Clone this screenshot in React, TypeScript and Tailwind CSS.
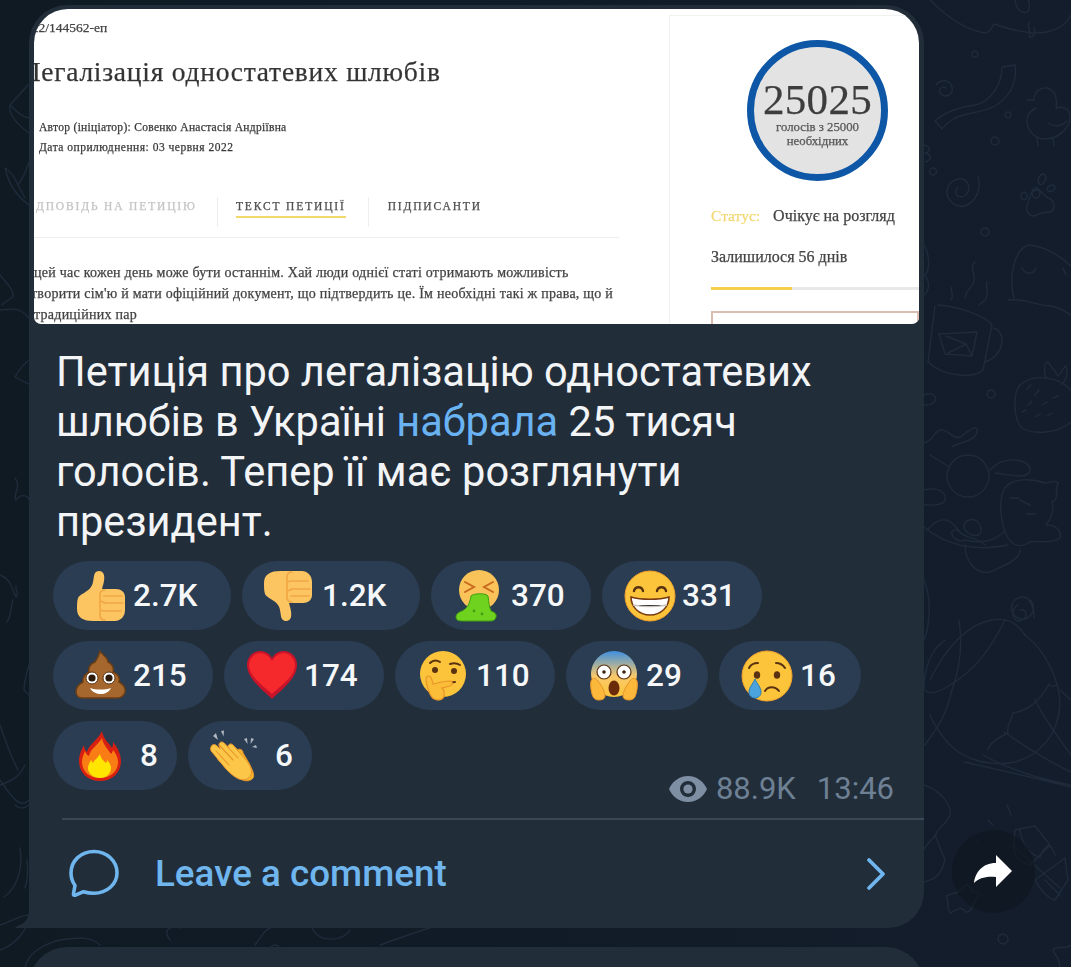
import type { ReactNode } from "react";

// Faint chat wallpaper, in page coordinates
const doodles = [
  "M930 0C945 15 965 30 985 33C990 33 992 27 994 24C1005 28 1020 32 1035 33C1050 33 1065 28 1071 15",
  "M1015 0C1016 10 1022 14 1028 12C1030 6 1030 2 1028 0M1030 22C1025 25 1032 30 1029 37C1034 38 1036 32 1034 28",
  "M1002 67L1015 65C1017 80 1012 95 995 106C985 112 965 113 955 118C950 121 945 125 942 129L935 121C945 112 960 107 975 105C990 102 1002 85 1002 67Z",
  "M1027 100H1033M1034 100C1034 92 1040 87 1047 88C1054 90 1058 97 1056 108C1062 106 1069 108 1070 115C1071 128 1058 139 1045 139C1034 139 1027 130 1027 120C1027 114 1032 110 1036 108M1048 123C1055 127 1062 126 1067 121M1037 138L1038 146M1053 138L1054 146",
  "M1036 188a4 5 0 1 0 .1 0M1043 174a3.5 5.5 20 1 0 .1 0M1024 192a3 4 0 1 0 .1 0M1052 185a3 4 60 1 0 .1 0M1037 190C1030 190 1030 198 1028 203C1025 210 1028 216 1034 216C1040 213 1046 212 1050 212C1056 210 1055 200 1048 198C1044 196 1042 190 1037 190Z",
  "M978 177C982 188 976 202 965 206C953 208 946 198 947 190C949 180 960 176 966 181C972 187 968 196 961 197C956 197 954 191 958 188",
  "M936 85C940 79 950 79 952 87C954 95 945 98 941 94C937 90 942 85 946 88",
  "M1014 298C1008 275 1015 250 1028 245C1045 246 1060 256 1071 266M1008 300C1025 298 1035 305 1050 306C1060 307 1066 312 1071 315M1022 268C1025 275 1033 275 1036 268M1063 268L1066 275",
  "M952 287C949 291 955 294 951 300M975 262C968 268 978 276 973 284C970 289 966 291 965 297M987 282C985 290 990 294 985 300C983 302 981 303 979 305",
  "M938 305C955 306 985 315 992 325M935 306L928 362C945 378 975 378 983 370L992 325M993 328C1006 330 1006 355 985 362M939 334L977 332L972 356L945 354ZM946 336L966 344L972 356M966 344L948 353",
  "M1020 385C1035 372 1060 378 1071 390M1020 385C1012 395 1014 420 1022 428C1035 436 1060 432 1071 422M1046 378C1043 370 1045 362 1048 362C1052 368 1056 372 1058 376C1062 372 1064 366 1066 366C1068 372 1068 378 1062 384",
  "M1027 389L1031 385M1035 395L1039 390M1028 405L1032 401M1042 405L1047 402M1053 398L1058 396M1035 417L1040 414M1047 416L1052 413M1022 412L1026 410",
  "M924 395C934 391 938 398 934 402C930 406 926 405 924 405",
  "M924 443C934 441 933 432 940 430C948 428 952 440 960 437C968 432 978 422 977 432C975 442 955 443 952 447",
  "M968 455a21 21 0 1 0 .1 0M930 455L948 466M924 490C940 486 948 494 944 502C940 506 930 505 924 505M927 530C940 515 950 518 958 530C965 540 975 535 985 545",
  "M990 470C1003 455 1030 458 1030 470C1028 480 1012 475 995 473M1005 488C1012 478 1030 478 1045 483C1052 482 1056 480 1058 483C1054 492 1060 498 1052 502C1055 510 1050 520 1046 525C1055 525 1062 530 1060 538C1050 545 1035 540 1030 542C1015 552 1005 540 1002 520C1000 508 1000 496 1005 488Z",
  "M1010 498L1019 498M1020 500L1030 505M1027 514L1035 514",
  "M924 527C945 545 975 552 1008 545M965 530C960 520 975 515 980 525C985 535 975 540 965 530ZM958 530C945 528 955 545 965 540C985 545 1000 538 1005 530M965 545C965 560 975 575 990 572C1005 565 1020 560 1020 550",
  "M1030 600a11 11 0 1 1-3-2C1030 600 1035 610 1034 618M1018 605C1010 608 1012 625 1022 620C1028 618 1027 608 1020 610",
  "M924 580C932 600 930 625 924 640",
  "M930 680C945 650 965 625 992 620C1005 618 1015 620 1025 635M959 620C962 640 961 665 952 690C945 720 935 730 925 745M1005 620C990 650 975 670 950 685C940 692 930 695 924 690",
  "M924 690C924 670 930 650 945 640M1025 635C1045 650 1060 680 1060 705C1058 735 1040 755 1015 762C990 767 965 760 950 745C940 735 932 720 930 715",
  "M1057 685C1060 682 1052 690 1049 684C1040 700 1030 710 1013 713C1012 720 1006 725 1008 733C998 738 990 742 988 750",
  "M1071 700L1060 690M1035 700C1045 720 1060 740 1071 755M1004 732C1030 750 1050 762 1071 772M983 755C1010 770 1045 780 1071 785M964 762C1000 770 1035 778 1071 787",
  "M924 785C940 790 952 805 950 815C946 825 935 830 936 835C932 840 925 845 924 850M935 835L945 860C940 880 930 880 924 882",
  "M1007 805L1011 815M988 820L993 825M975 841L978 842",
  "M1015 830L1035 826L1050 845L1030 865C1020 862 1012 855 1014 845ZM1020 830C1022 845 1030 855 1040 857M1012 845L1060 888M1040 857C1045 845 1050 840 1055 855M1035 880L1065 858L1068 880L1055 900C1050 900 1040 890 1035 880ZM1045 880L1060 895",
  "M963 888C966 883 970 885 972 892C978 892 983 892 975 900C973 905 972 912 966 912C960 905 958 910 950 913C945 905 950 900 946 897C948 893 958 895 963 888Z",
  "M1003 934a5 5 0 1 0 .1 0M1071 945C1065 950 1055 945 1053 950C1055 956 1060 958 1060 967",
  "M975 57a3 3 0 1 0-.1 0M1008 112a3 3 0 1 0 .1 0M995 137a4 4 0 1 0 .1 0M933 168a3.5 3.5 0 1 0 .1 0M985 228a4 4 0 1 0 .1 0M991 390a4 4 0 1 0 .1 0",
  "M924 145C932 147 930 152 925 153C932 155 932 160 925 162",
  "M924 245C930 255 930 270 925 275M924 275C930 280 930 290 924 295",
  "M28 85L10 105C8 115 18 125 29 133M10 105C17 112 22 117 29 118M5 168C12 172 15 178 18 185C25 175 28 165 29 162M5 168C10 190 22 200 29 205M18 185L25 198",
  "M0 275C8 285 14 290 13 297C8 300 5 302 2 305M0 310C10 310 18 305 29 318M29 360C22 365 18 372 15 377C20 380 25 382 29 384",
  "M15 478C22 487 12 495 16 500C22 492 29 497 29 500M0 575C12 580 12 590 16 597C20 588 15 595 16 586M13 600C10 607 12 615 7 622",
  "M29 665C26 675 24 682 24 690L29 695",
  "M0 725C5 740 10 755 18 770M0 785C15 780 20 775 25 765M0 780C10 795 20 810 29 800M15 805C20 810 25 808 29 805",
  "M20 848C24 870 15 890 4 897M25 888C28 880 28 870 27 860",
  "M0 925C15 920 20 915 30 915C28 930 15 945 0 950M25 967C28 955 40 945 60 940C75 938 90 935 100 945M170 940C162 930 170 925 180 928M275 945a5 5 0 1 0 .1 0M255 945C262 935 265 930 270 928M312 928C320 945 345 940 350 930M380 945C400 938 415 932 430 928",
];

function ThumbShape() {
  return (
    <>
      <path
        fill="#fdc562"
        d="M3 28c2-4 10-6 13-11 3-4 2-10 4-14 2-3 8-3 9 2 1 5-1 10-2 14h14c5 0 9 3 9 8v13c0 7-5 11-10 11H18C9 51 2 48 2 39c0-4 0-8 1-11z"
      />
      <path
        fill="none"
        stroke="#f1a845"
        strokeWidth="1.7"
        strokeLinecap="round"
        d="M30 20c-3 0-5 2-5 5v4c0 2 2 3 4 3M25 31v7c0 2 2 3 4 3M25 41v4c0 3 2 5 5 5M29 26h18M29 33h19M29 41h17"
      />
    </>
  );
}

const emojis: Record<string, ReactNode> = {
  up: <ThumbShape />,
  down: (
    <g transform="matrix(1 0 0 -1 0 52)">
      <ThumbShape />
    </g>
  ),
  vomit: (
    <>
      <circle cx="28" cy="20" r="20" fill="#f9c35a" />
      <path
        fill="none"
        stroke="#c86a1e"
        strokeWidth="2"
        strokeLinecap="round"
        d="M14 12l9 5-9 5M42 12l-9 5 9 5"
      />
      <path
        fill="#6fd21e"
        stroke="#3fa012"
        strokeWidth="1"
        d="M20 26c3-3 15-3 17 0 1 6 1 11 3 15 3 1 6 3 5 6-1 4-4 4-7 4H13c-4 0-8 0-8-4 0-3 3-5 6-6 5-2 8-8 9-15z"
      />
      <circle cx="23" cy="41" r="1.4" fill="#3fa012" />
      <circle cx="31" cy="44" r="1.4" fill="#3fa012" />
    </>
  ),
  grin: (
    <>
      <circle cx="26" cy="26" r="25" fill="#fcc43b" stroke="#f0a12e" strokeWidth="1" />
      <path
        fill="none"
        stroke="#5a3212"
        strokeWidth="2.4"
        strokeLinecap="round"
        d="M10 21c1-5 8-5 9 0M33 21c1-5 8-5 9 0"
      />
      <path
        fill="#fff"
        stroke="#7a3c12"
        strokeWidth="1.6"
        d="M7 27c10 3 28 3 38 0 0 10-8 18-19 18S7 37 7 27z"
      />
      <path stroke="#c9c3bb" strokeWidth="1.4" d="M9 35c11 2 23 2 34 0" />
    </>
  ),
  poop: (
    <>
      <path
        fill="#a5672d"
        stroke="#6a3d14"
        strokeWidth="1.4"
        d="M25 1c2 4 8 6 8 11 4 2 6 6 5 10 5 2 7 6 6 10 4 2 7 6 6 10-1 4-4 6-8 6H7c-4 0-6-3-6-6 0-4 3-8 7-10-1-4 2-8 6-10-1-5 1-8 6-10 2-3 4-6 5-11z"
      />
      <circle cx="17" cy="28" r="6" fill="#fff" stroke="#5a3212" />
      <circle cx="34" cy="28" r="6" fill="#fff" stroke="#5a3212" />
      <circle cx="17" cy="28" r="3.6" fill="#2b1a0c" />
      <circle cx="34" cy="28" r="3.6" fill="#2b1a0c" />
      <path fill="#fff" d="M15 38c6 2 15 2 21 0-2 4-6 6-10 6s-9-2-11-6z" />
    </>
  ),
  heart: (
    <>
      <path
        fill="#c8142a"
        d="M26 49C18 41 1 29 1 15 1 6 8 1 14 1c5 0 9 2 12 7 3-5 7-7 12-7 6 0 13 5 13 14 0 14-17 26-25 34z"
      />
      <path
        fill="#f5282c"
        d="M26 44C18 36 3 27 3 15 3 8 9 3 14 3c5 0 9 3 12 8 3-5 7-8 12-8 5 0 11 5 11 12 0 12-15 21-23 29z"
      />
    </>
  ),
  think: (
    <>
      <circle cx="26" cy="24" r="23" fill="#fcc43b" />
      <path
        fill="none"
        stroke="#5a3212"
        strokeWidth="2"
        strokeLinecap="round"
        d="M13 13c3-3 7-3 10-1M33 14c3-1 7-1 10 1M26 35c4-2 8-3 12-3"
      />
      <circle cx="18" cy="20" r="3" fill="#5a3212" />
      <circle cx="37" cy="21" r="3" fill="#5a3212" />
      <path
        fill="#fbbd38"
        stroke="#e8952a"
        strokeWidth="1.2"
        d="M12 26c2 0 3 3 4 8 4-1 13-3 17-3 3 0 3 4 0 5l-8 2c3 2 3 9 0 11-3 2-9 1-11-3-3-5-5-13-5-17 0-2 1-3 3-3z"
      />
    </>
  ),
  scream: (
    <>
      <defs>
        <linearGradient id="screamFace" x1="0" y1="0" x2="0" y2="1">
          <stop offset="0" stopColor="#3e8fe0" />
          <stop offset="0.55" stopColor="#f9c96a" />
          <stop offset="1" stopColor="#fcc43b" />
        </linearGradient>
      </defs>
      <circle cx="26" cy="24" r="23" fill="url(#screamFace)" />
      <circle cx="16" cy="22" r="7" fill="#fff" stroke="#5a3212" strokeWidth="1.2" />
      <circle cx="36" cy="22" r="7" fill="#fff" stroke="#5a3212" strokeWidth="1.2" />
      <circle cx="16" cy="22" r="1.8" fill="#3a2410" />
      <circle cx="36" cy="22" r="1.8" fill="#3a2410" />
      <ellipse cx="26" cy="38" rx="5.5" ry="7.5" fill="#6b2a08" />
      <path
        fill="#fcb83a"
        stroke="#e8952a"
        d="M3 31c2-4 5-3 7 0 4 5 7 11 7 15 0 3-3 4-6 4-4 0-6-2-7-6-1-4-2-9-1-13zM49 31c-2-4-5-3-7 0-4 5-7 11-7 15 0 3 3 4 6 4 4 0 6-2 7-6 1-4 2-9 1-13z"
      />
    </>
  ),
  cry: (
    <>
      <circle cx="26" cy="26" r="25" fill="#fcc43b" stroke="#f0a12e" strokeWidth="1" />
      <path
        fill="none"
        stroke="#5a3212"
        strokeWidth="2"
        strokeLinecap="round"
        d="M8 18c2-4 6-5 9-5M35 13c3 0 7 2 9 5M24 41c3-5 10-5 14 0"
      />
      <ellipse cx="16" cy="25" rx="3.2" ry="3.8" fill="#5a3212" />
      <ellipse cx="36" cy="25" rx="3.2" ry="3.8" fill="#5a3212" />
      <path
        fill="#4aa3dd"
        stroke="#2b7db5"
        d="M14 29c2 5 6 8 6 13 0 4-3 6-6 6s-6-2-6-6c0-5 4-8 6-13z"
      />
    </>
  ),
  fire: (
    <>
      <path
        fill="#d81f12"
        d="M28 1c1 8 7 12 10 17 1-2 1-4 1-6 5 6 8 13 8 19 0 12-9 20-21 20S5 43 5 31c0-7 3-12 5-16 0 3 1 5 3 7 2-8 11-12 15-21z"
      />
      <path
        fill="#f97d14"
        d="M28 8c1 7 6 11 9 16 1-1 2-3 2-4 4 5 5 9 5 12 0 10-8 16-18 16S8 42 8 32c0-5 2-8 3-11 1 3 2 4 4 5 1-7 10-12 13-18z"
      />
      <path
        fill="#ffe500"
        d="M26 24c1 5 4 7 6 9 1-1 1-2 1-3 3 3 4 6 4 8 0 6-5 10-11 10s-12-4-12-10c0-3 2-6 3-8 1 1 1 2 2 3 2-4 6-6 7-9z"
      />
    </>
  ),
  clap: (
    <>
      <path
        fill="#f7b52e"
        stroke="#e8952a"
        strokeWidth="1"
        d="M8 22c3-5 7-5 9-2l4-2c3-2 6 0 6 2 3-2 6 0 6 3l6 10c3 6 6 12 4 15-2 3-8 4-12 1L10 32c-3-3-4-6-2-10z"
      />
      <path
        fill="#fcc748"
        stroke="#e8952a"
        strokeWidth="1"
        d="M1 17c1-3 4-3 6-1l3 3-1-4c0-3 3-4 5-2l4 4c0-3 3-4 5-2l13 15c3 4 7 10 5 15-2 4-7 6-12 4-5-2-9-6-13-10L2 22c-1-1-2-3-1-5z"
      />
      <path
        fill="none"
        stroke="#e8952a"
        strokeWidth="1.1"
        strokeLinecap="round"
        d="M9 15l14 15M15 14l13 14M6 21l13 14"
      />
      <path fill="#aeb7c2" d="M3 6l3-3 2 7zM11 1l3-.5-.5 6zM34 9l3-1 .5 6zM41 8l3 1-3.5 5zM46 15l1 3-5-1z" />
    </>
  ),
};

function Emoji({ name }: { name: string }) {
  return (
    <svg viewBox="0 0 52 52" className="w-[52px] h-[52px] shrink-0">
      {emojis[name]}
    </svg>
  );
}

const reactions = [
  { emoji: "up", count: "2.7K", cls: "w-[178px] pl-[22px] gap-[6px]" },
  { emoji: "down", count: "1.2K", cls: "w-[178px] pl-[20px] gap-[8px]" },
  { emoji: "vomit", count: "370", cls: "w-[160px] pl-[20px] gap-[8px]" },
  { emoji: "grin", count: "331", cls: "w-[160px] pl-[22px] gap-[6px]" },
  { emoji: "poop", count: "215", cls: "w-[160px] pl-[22px] gap-[6px]" },
  { emoji: "heart", count: "174", cls: "w-[160px] pl-[22px] gap-[6px]" },
  { emoji: "think", count: "110", cls: "w-[160px] pl-[22px] gap-[7px]" },
  { emoji: "scream", count: "29", cls: "w-[142px] pl-[22px] gap-[6px]" },
  { emoji: "cry", count: "16", cls: "w-[142px] pl-[22px] gap-[7px]" },
  { emoji: "fire", count: "8", cls: "w-[124px] pl-[21px] gap-[14px]" },
  { emoji: "clap", count: "6", cls: "w-[124px] pl-[22px] gap-[13px]" },
];

function PetitionImage() {
  return (
    <div className="flex h-[315px] mx-[5px] mt-[4px] bg-white rounded-t-[34px] rounded-b-[7px] overflow-hidden font-['Liberation_Serif',serif] [-webkit-text-stroke:0.25px_#444] blur-[0.4px]">
      {/* Left column of the petition page */}
      <div className="w-[635px] shrink-0 overflow-hidden">
        <p className="mt-[11px] -ml-[6px] text-[13.5px] leading-[16px] text-[#444]">
          /22/144562-еп
        </p>
        <h1 className="mt-[19px] -ml-[12px] text-[27.5px] leading-[34px] tracking-[0.75px] text-[#333] whitespace-nowrap">
          Легалізація одностатевих шлюбів
        </h1>
        <p className="mt-[28px] ml-[5px] text-[11.5px] leading-[20px] text-[#333] tracking-[0.3px]">
          Автор (ініціатор): Совенко Анастасія Андріївна
        </p>
        <p className="ml-[5px] text-[11.5px] leading-[20px] text-[#333] tracking-[0.5px]">
          Дата оприлюднення: 03 червня 2022
        </p>
        <div className="flex mt-[40px] h-[28px] text-[11.5px] leading-[18px] tracking-[1.85px] whitespace-nowrap">
          <span className="w-[185px] h-[30px] -ml-[1px] pl-[3px] text-[#c4c4c4] [-webkit-text-stroke:0.25px_#c4c4c4] border-r border-[#eee]">
            ДПОВІДЬ НА ПЕТИЦІЮ
          </span>
          <span className="ml-[18px] h-[21px] text-[#555] border-b-2 border-[#f2d96b]">
            ТЕКСТ ПЕТИЦІЇ
          </span>
          <span className="h-[30px] ml-[22px] pl-[19px] text-[#555] border-l border-[#eee]">
            ПІДПИСАНТИ
          </span>
        </div>
        <div className="w-[585px] h-[1px] mt-[12px] bg-[#eee]" />
        <div className="mt-[24px] text-[14px] leading-[21px] text-[#444] tracking-[0.25px] whitespace-nowrap">
          <p>цей час кожен день може бути останнім. Хай люди однієї статі отримають можливість</p>
          <p className="-ml-[3px]">творити сім'ю й мати офіційний документ, що підтвердить це. Їм необхідні такі ж права, що й</p>
          <p>традиційних пар</p>
        </div>
      </div>

      {/* Right column: counter and status */}
      <div className="flex-1 mt-[6px] pl-[41px] border-l border-t border-[#f1f1f1] overflow-hidden whitespace-nowrap">
        <div className="flex flex-col items-center w-[141px] h-[141px] mt-[24px] ml-[36px] rounded-full border-[7px] border-[#0e57a6] bg-[#e3e3e3]">
          <span className="mt-[32px] text-[43px] leading-[42px] tracking-[0.3px] text-[#3d3d3d]">25025</span>
          <span className="-mt-[1px] text-[12.8px] leading-[14px] text-[#666] text-center">
            голосів з 25000
            <br />
            необхідних
          </span>
        </div>
        <p className="mt-[26px] text-[16px] leading-[18px] text-[#444]">
          <span className="text-[#f3d873] text-[15.5px] mr-[13px] [-webkit-text-stroke:0.25px_#f3d873]">Статус:</span>Очікує на розгляд
        </p>
        <p className="mt-[23px] text-[16px] leading-[18px] text-[#444]">
          Залишилося 56 днів
        </p>
        <div className="flex h-[3px] mt-[21px] bg-[#e8e8e8]">
          <div className="w-[81px] bg-[#f5cf4c]" />
        </div>
        <div className="h-[40px] mt-[21px] border-2 border-[#dcbcb0]" />
      </div>
    </div>
  );
}

export default function App() {
  return (
    <div className="relative w-[1071px] h-[967px] overflow-hidden bg-linear-to-r from-[#0f1a23] to-[#141d2c] font-['Roboto',sans-serif]">
      <svg
        viewBox="0 0 1071 967"
        className="absolute inset-0 w-[1071px] h-[967px]"
        fill="none"
        stroke="#1f2b3b"
        strokeWidth="1.4"
        strokeLinecap="round"
        strokeLinejoin="round"
      >
        {doodles.map((d, i) => (
          <path key={i} d={d} />
        ))}
      </svg>

      <div className="relative pt-[5px] pl-[29px]">
        <div className="flex">
          {/* Message bubble */}
          <div className="relative w-[895px] h-[923px] shrink-0 bg-[#222d3a] rounded-t-[38px] rounded-br-[36px]">
            <svg viewBox="0 0 16 16" className="absolute left-[-14px] bottom-0 w-[16px] h-[16px]">
              <path fill="#222d3a" d="M16 0v16H2C0 16 0 15 1 14.5 7 13 13 9 14 0z" />
            </svg>

            <PetitionImage />

            <p className="mt-[23px] px-[27px] text-[41.6px] leading-[50px] text-[#f2f4f6] whitespace-nowrap">
              Петиція про легалізацію одностатевих
              <br />
              шлюбів в Україні <span className="text-[#6ab3f3]">набрала</span> 25 тисяч
              <br />
              голосів. Тепер її має розглянути
              <br />
              президент.
            </p>

            {/* Reactions */}
            <div className="flex flex-wrap gap-[11px] mt-[14px] ml-[24px] mr-[30px]">
              {reactions.map((r) => (
                <div key={r.emoji} className={`flex items-center h-[69px] rounded-full bg-[#2b3d52] ${r.cls}`}>
                  <Emoji name={r.emoji} />
                  <span className="text-[31.5px] font-medium text-[#f5f7f9]">{r.count}</span>
                </div>
              ))}
              <div className="flex items-center h-[30px] ml-auto self-end mb-[-14px] text-[31px] text-[#6d8094]">
                <svg viewBox="0 0 38 26" className="w-[38px] h-[26px] mr-[9px]">
                  <path
                    fill="#7e8fa3"
                    fillRule="evenodd"
                    d="M19 0C10 0 3 6 0 13c3 7 10 13 19 13s16-6 19-13C35 6 28 0 19 0zM19 21a8 8 0 1 1 0-16 8 8 0 0 1 0 16z"
                  />
                  <circle cx="19" cy="13" r="4.6" fill="#7e8fa3" />
                </svg>
                <span>88.9K</span>
                <span className="ml-[21px]">13:46</span>
              </div>
            </div>

            {/* Comments footer */}
            <div className="h-[2px] mt-[28px] ml-[33px] bg-[#3a4856]" />
            <div className="flex items-center h-[108px] pl-[40px] pr-[38px]">
              <svg viewBox="0 0 50 50" className="w-[50px] h-[50px]" fill="none" stroke="#6fb5ee" strokeWidth="3.6" strokeLinejoin="round">
                <path d="M25 2.5C12 2.5 2 11.5 2 24c0 5 1.5 9 4 12.5l-1.5 8c-.3 1.5.5 2 2 1.7l8-3.5c3 1 6.5 1.5 10.5 1.5 13 0 23-9 23-20.5S38 2.5 25 2.5z" />
              </svg>
              <span className="ml-[36px] text-[36.8px] font-medium text-[#6fb5ee]">Leave a comment</span>
              <svg viewBox="0 0 20 34" className="ml-auto w-[20px] h-[34px]" fill="none" stroke="#6fb5ee" strokeWidth="3.8" strokeLinecap="round" strokeLinejoin="round">
                <path d="M3 3l14 14L3 31" />
              </svg>
            </div>
          </div>

          {/* Forward button */}
          <div className="flex items-center justify-center w-[83px] h-[83px] ml-[28px] mt-[825px] rounded-full bg-[#0e151e]/60">
            <svg viewBox="0 0 83 83" className="w-[83px] h-[83px]">
              <path fill="#fff" d="M44 25l16 16-16 16V47c-10-1-17 1-22 6 1-10 8-20 22-20z" />
            </svg>
          </div>
        </div>

        {/* Next message, cut off by the window */}
        <div className="w-[895px] h-[80px] mt-[19px] bg-[#222d3a] rounded-t-[38px]" />
      </div>
    </div>
  );
}
